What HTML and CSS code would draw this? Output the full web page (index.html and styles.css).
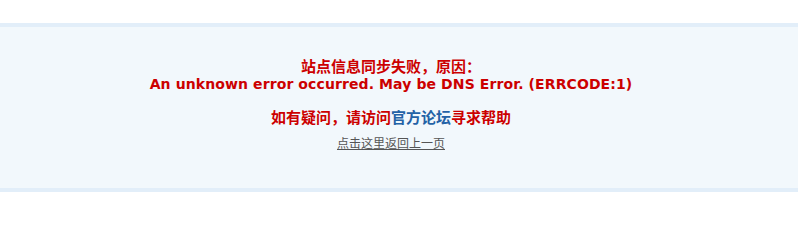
FILE: index.html
```html
<!DOCTYPE html>
<html lang="zh-CN">
<head>
<meta charset="utf-8">
<title>提示信息</title>
<link rel="stylesheet" href="styles.css">
</head>
<body>
<div class="msgbox">
  <div class="msg">
    <p class="err"><span class="zh">站点信息同步失败，原因：</span><br><span class="en">An unknown error occurred. May be DNS Error. (ERRCODE:1)</span></p>
    <p class="help">如有疑问，请访问<a class="forum" href="#">官方论坛</a>寻求帮助</p>
    <p class="back"><a href="#">点击这里返回上一页</a></p>
  </div>
</div>
</body>
</html>
```
FILE: styles.css
```css
html, body {
  margin: 0;
  padding: 0;
  background: #fff;
}
body {
  font-family: "DejaVu Sans", Verdana, "Noto Sans CJK SC", sans-serif;
  font-size: 12px;
  color: #333;
}
.msgbox {
  margin-top: 23px;
  border-top: 4px solid #e2eef9;
  border-bottom: 4px solid #e2eef9;
  background: #f2f8fc;
  height: 161px;
}
.msg {
  text-align: center;
  padding-top: 30px;
  padding-right: 16px;
}
.msg p {
  margin: 0;
}
.err {
  color: #c00;
  font-weight: bold;
  font-size: 14px;
  line-height: 17px;
}
.err .zh {
  font-family: "Noto Sans CJK SC", sans-serif;
  font-size: 15px;
}
.err .en {
  font-family: "DejaVu Sans", Verdana, sans-serif;
  font-size: 14px;
  letter-spacing: 0.1px;
}
.help {
  margin-top: 14px !important;
  color: #c00;
  font-family: "Noto Sans CJK SC", sans-serif;
  font-weight: bold;
  font-size: 15px;
  line-height: 20px;
}
.help .forum {
  color: #2462a6;
  text-decoration: none;
}
.back {
  margin-top: 8px !important;
  font-family: "Noto Sans CJK SC", sans-serif;
  font-size: 12px;
  line-height: 16px;
}
.back a {
  color: #555;
  text-decoration: underline;
}
```
